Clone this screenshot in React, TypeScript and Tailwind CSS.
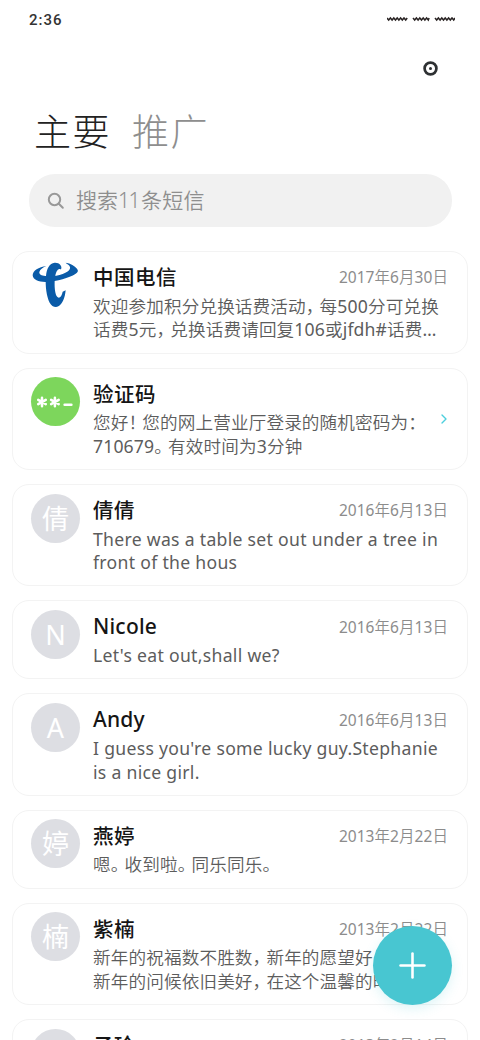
import React from 'react';
import { ChevronRight, Plus } from 'lucide-react';

interface Message {
  id: number;
  name: string;
  avatar: string;
  date?: string;
  lines: string[];
}

const messages: Message[] = [
  {
    id: 1,
    name: '中国电信',
    avatar: 'telecom',
    date: '2017年6月30日',
    lines: ['欢迎参加积分兑换话费活动，每500分可兑换', '话费5元，兑换话费请回复106或jfdh#话费…'],
  },
  {
    id: 2,
    name: '验证码',
    avatar: 'code',
    lines: ['您好！您的网上营业厅登录的随机密码为：', '710679。有效时间为3分钟'],
  },
  {
    id: 3,
    name: '倩倩',
    avatar: '倩',
    date: '2016年6月13日',
    lines: ['There was a table set out under a tree in', 'front of the hous'],
  },
  { id: 4, name: 'Nicole', avatar: 'N', date: '2016年6月13日', lines: ["Let's eat out,shall we?"] },
  {
    id: 5,
    name: 'Andy',
    avatar: 'A',
    date: '2016年6月13日',
    lines: ["I guess you're some lucky guy.Stephanie", 'is a nice girl.'],
  },
  { id: 6, name: '燕婷', avatar: '婷', date: '2013年2月22日', lines: ['嗯。收到啦。同乐同乐。'] },
  {
    id: 7,
    name: '紫楠',
    avatar: '楠',
    date: '2013年2月22日',
    lines: ['新年的祝福数不胜数，新年的愿望好', '新年的问候依旧美好，在这个温馨的时'],
  },
  { id: 8, name: '子玲', avatar: '玲', date: '2013年2月14日', lines: ['新年快乐'] },
];

const isLatin = (text: string) => /^[\x20-\x7e…]+$/.test(text);

// Latin runs need the regular weight next to the thinner Chinese glyphs,
// and Chinese punctuation takes less than a full em
const MixedText: React.FC<{ text: string }> = ({ text }) => (
  <>
    {text
      .split(/([，。！：]|[\x20-\x7e…]+)/)
      .filter(Boolean)
      .map((part, i) => (
        <span
          key={i}
          className={/^[，。！：]$/.test(part) ? 'tracking-[-3.8px]' : isLatin(part) ? 'font-normal' : undefined}
        >
          {part}
        </span>
      ))}
  </>
);

const BodyLine: React.FC<{ text: string }> = ({ text }) => (
  <div
    className={`h-[23.4px] whitespace-nowrap leading-[23.4px] ${
      isLatin(text) ? 'tracking-[0.3px]' : 'tracking-[0.14px]'
    }`}
  >
    <MixedText text={text} />
  </div>
);

const TelecomLogo = () => (
  <svg viewBox="0 0 150 156" className="-ml-px -mt-[2.7px] h-[52px] w-[50px]" fill="#0a5ba8">
    <path d="M49 24C26 27 8 38 8 52C9 66 28 73 50 72C80 70 118 60 136 48C144 42 146 38 141 32C134 24 122 16 107 14C110 18 118 20 120 27C122 36 112 43 98 48C82 54 62 56 46 54C34 53 27 49 28 42C30 34 40 28 49 24Z" />
    <path d="M93 34C98 24 88 13 74 14C58 16 50 32 48 54C45 84 50 116 59 134C65 145 76 150 85 145C98 138 105 118 107 97L98 101C96 111 92 119 86 119C76 118 73 92 74 70C75 50 79 38 86 34C89 32 91 34 93 34Z" />
  </svg>
);

const Avatar: React.FC<{ kind: string }> = ({ kind }) => {
  if (kind === 'telecom') {
    return <TelecomLogo />;
  }
  if (kind === 'code') {
    return (
      <div className="flex size-[48.5px] items-center justify-center rounded-full bg-[#7dd65c]">
        <svg viewBox="0 0 38 12" className="h-3 w-[38px]" stroke="#fff" strokeWidth="2.5" strokeLinecap="round">
          <path d="M6 1.800v8.400M2.200 3.800l7.600 4.400M9.800 3.800l-7.600 4.400M18.900 1.800v8.400M15.100 3.800l7.600 4.400M22.700 3.800l-7.600 4.400M28.600 8.800h6.800" />
        </svg>
      </div>
    );
  }
  return (
    <div className="flex size-[49px] items-center justify-center rounded-full bg-[#dddee3] text-[27px] leading-none text-white">
      {kind}
    </div>
  );
};

const MessageCard: React.FC<{ message: Message }> = ({ message }) => (
  <div className="flex rounded-[17px] border border-[#f3f3f3] pb-[10.8px] pl-[18px] pr-[19px] pt-[8.7px]">
    <div className="w-[62px] shrink-0">
      <Avatar kind={message.avatar} />
    </div>
    <div className="min-w-0 flex-1">
      <div className="flex h-[34px] items-center justify-between">
        <span
          className={`font-medium text-[#151515] ${
            isLatin(message.name) ? 'pb-[1.5px] text-[21px] tracking-[0.2px]' : 'pb-px text-[20.5px] tracking-[0.5px]'
          }`}
        >
          {message.name}
        </span>
        {message.date && (
          <span className="text-[15.5px] font-[350] tracking-[0.05px] text-[#8c8c8c]">
            <MixedText text={message.date} />
          </span>
        )}
      </div>
      <div className="flex items-start justify-between text-[17.6px] font-[350] text-[#5c5c5c]">
        <div>
          {message.lines.map((line) => (
            <BodyLine key={line} text={line} />
          ))}
        </div>
        {!message.date && <ChevronRight className="-mr-1 size-4 text-[#4bcfdd]" />}
      </div>
    </div>
  </div>
);

const App: React.FC = () => (
  <div className="relative h-[1040px] w-[480px] overflow-hidden bg-white font-['Noto_Sans','Noto_Sans_CJK_SC',sans-serif]">
    <div className="flex h-10 items-center justify-between pl-[29px] pr-[25px]">
      <span className="font-['Roboto',sans-serif] text-[15px] font-medium tracking-[1px] text-[#333]">2:36</span>
      <svg viewBox="0 0 68 6" className="-mt-0.5 h-1.5 w-[68px]" fill="none" stroke="#2a2424" strokeWidth="1.5">
        <path d="M0 2l1.700 2 1.700-2 1.700 2 1.700-2 1.700 2 1.700-2 1.700 2 1.700-2 1.700 2 1.700-2 1.700 2 1.500-2M26 2l1.700 2 1.700-2 1.700 2 1.700-2 1.700 2 1.700-2 1.700 2 1.700-2 1.700 2 .8-2M48 2l1.700 2 1.700-2 1.700 2 1.700-2 1.700 2 1.700-2 1.700 2 1.700-2 1.700 2 1.700-2 1.700 2 1.300-2" />
      </svg>
    </div>
    <div className="flex h-14 items-center justify-end pr-[42.5px]">
      <svg viewBox="0 0 15 15" className="size-[15px]" fill="none">
        <circle cx="7.5" cy="7.5" r="5.900" stroke="#2e3133" strokeWidth="2.700" />
        <circle cx="7.5" cy="7.5" r="1.500" fill="#2e3133" />
      </svg>
    </div>
    <div className="flex h-[70px] items-center gap-[21px] pl-[34px] pt-0.5 text-[37px] font-light tracking-[1.5px]">
      <span className="text-[#222]">主要</span>
      <span className="text-[#8e8e8e]">推广</span>
    </div>
    <div className="mx-[29px] mt-[7.5px] flex h-[53px] w-[423px] items-center rounded-[26px] bg-[#f1f1f1] pl-[18px] pt-px text-[21px] font-[350] text-[#8e8e8e]">
      <svg
        viewBox="0 0 18 18"
        className="mr-[11px] size-[18px]"
        fill="none"
        stroke="#999"
        strokeWidth="2"
        strokeLinecap="round"
      >
        <circle cx="7.5" cy="7.5" r="5.700" />
        <path d="M11.800 11.800l4 4" />
      </svg>
      <span>
        搜索<span className="tracking-[-1.5px]">11</span>
        <span className="ml-0.5 tracking-[0.2px]">条短信</span>
      </span>
    </div>
    <div className="mx-3 mt-[24.9px] flex w-[456px] flex-col gap-[14.1px]">
      {messages.map((message) => (
        <MessageCard key={message.id} message={message} />
      ))}
    </div>
    <button className="absolute left-[372.5px] top-[926px] flex size-[79px] items-center justify-center rounded-full bg-[#48c6d1] text-white shadow-[0_4px_12px_rgba(72,198,209,0.18)]">
      <Plus className="size-[41px]" strokeWidth={1.5} />
    </button>
  </div>
);

export default App;
